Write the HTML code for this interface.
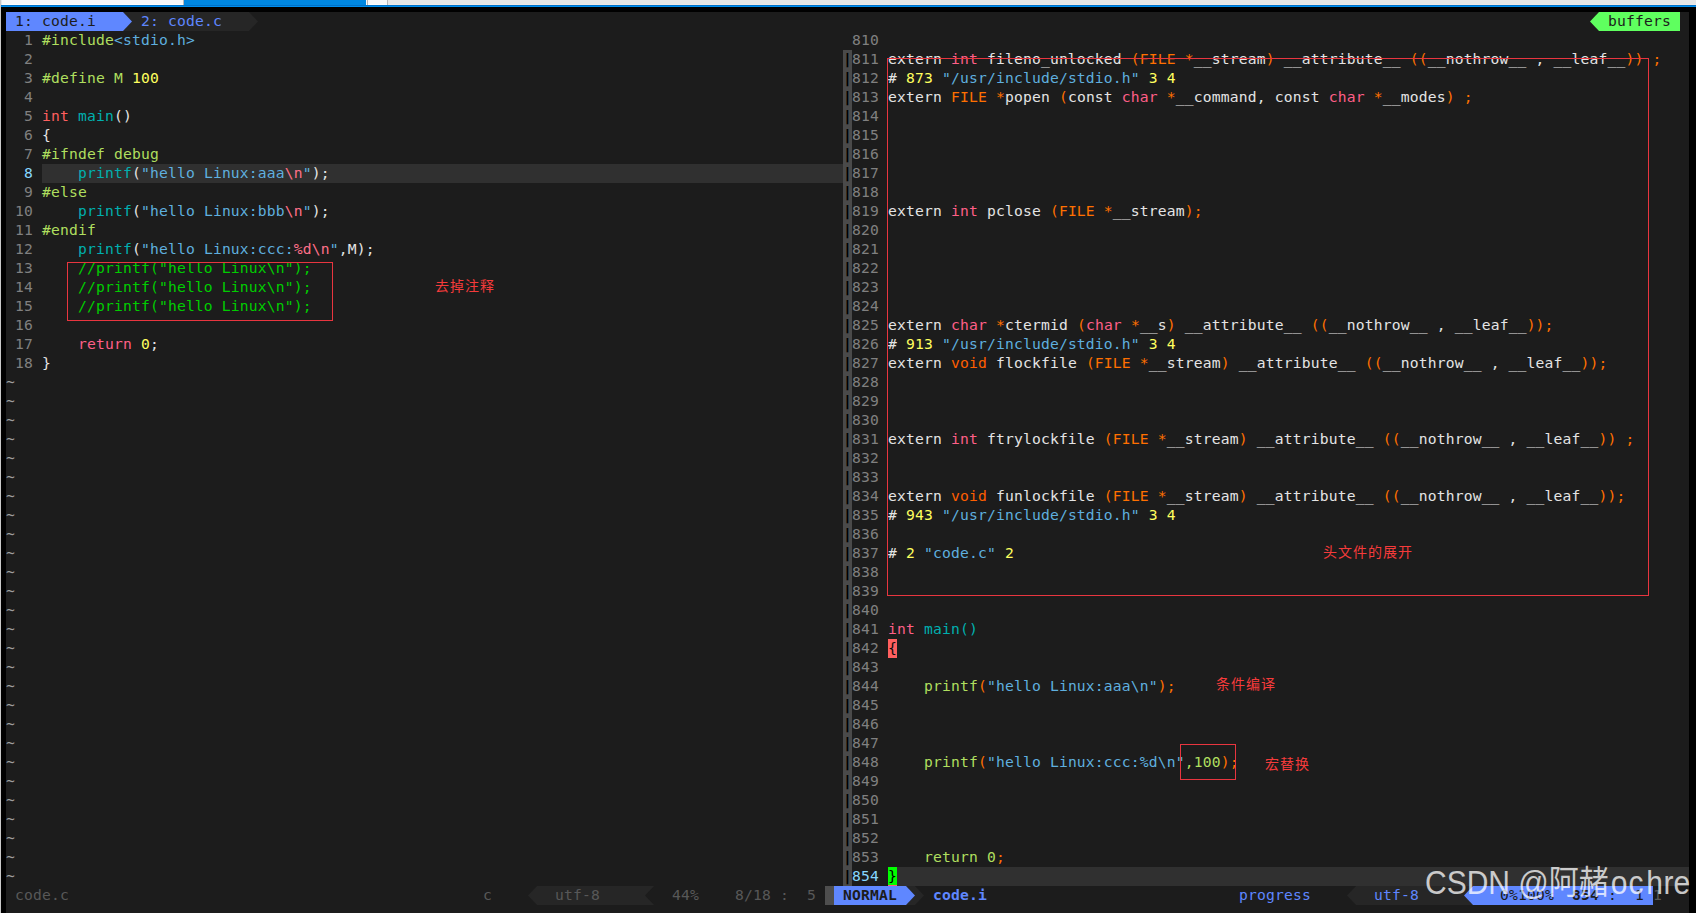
<!DOCTYPE html>
<html lang="zh"><head><meta charset="utf-8"><title>vim - code.i</title>
<style>
html,body{margin:0;padding:0}
body{width:1696px;height:913px;overflow:hidden;position:relative;background:#1c1c1c;
font-family:"DejaVu Sans Mono","Liberation Mono",monospace;font-size:14.667px;line-height:19px;color:#e4e4e4}
.r{position:absolute;white-space:pre;height:19px;letter-spacing:0.1697px}
.bx{position:absolute;height:19px}
.ar{position:absolute;display:block}
.vs{position:absolute;left:843px;width:9px;height:19px;background:#4a4a4a;color:#000;font-weight:bold;white-space:pre}
.vs span{display:block;height:19px;margin-top:-1px}
.top{position:absolute}
.n{color:#808080}.cn{color:#87d7ff}
.w{color:#e4e4e4}.pp{color:#afdf5f}.s{color:#5fafdf}.nu{color:#ffff5f}
.ty{color:#ff5f5f}.tp{color:#ff5f87}.fn{color:#00afaf}.sp{color:#ff7088}.cm{color:#00cd00}.kw{color:#ff5f87}
.o{color:#ff7000}.vo{color:#ff5f00}.id{color:#afdf5f}.tl{color:#9e9e9e}
.mp{color:#0a0a0a}.cu{color:#000}
.tb{color:#1c1c1c}.tb2{color:#5f87ff}.tbb{color:#1c1c1c;font-weight:bold}
.si{color:#585858}.sb{color:#5f87ff}.fi{color:#5f87ff;font-weight:bold}.nm{color:#1c1c1c;font-weight:bold}
.ann{position:absolute;color:#f53b3b;font-family:"Liberation Sans","Noto Sans CJK SC",sans-serif;font-size:14px;letter-spacing:1px;line-height:19px;white-space:pre}
.rb{position:absolute;border:1px solid #e8353f;box-sizing:border-box}
.wm{position:absolute;left:1425px;top:865px;transform:scaleY(1.09);transform-origin:0 29px;font-family:"Liberation Sans","Noto Sans CJK SC",sans-serif;font-size:30px;line-height:38px;color:rgba(255,255,255,0.75);white-space:pre}
</style></head><body>
<div class="top" style="left:0;top:0;width:1696px;height:5px;background:#e6e6e6"></div>
<div class="top" style="left:2px;top:0;width:385px;height:4px;background:#f8f8f8"></div>
<div class="top" style="left:2px;top:4px;width:385px;height:1px;background:#fffefc"></div>
<div class="top" style="left:388px;top:4px;width:1308px;height:1px;background:#efe9e6"></div>
<div class="top" style="left:183px;top:0;width:1px;height:5px;background:#b8b8b8"></div>
<div class="top" style="left:184px;top:0;width:182px;height:5px;background:#0088e2"></div>
<div class="top" style="left:367px;top:0;width:1px;height:5px;background:#b8b8b8"></div>
<div class="top" style="left:387px;top:0;width:1px;height:5px;background:#b8b8b8"></div>
<div class="top" style="left:0;top:5px;width:1696px;height:1px;background:#0072c9"></div>
<div class="top" style="left:0;top:6px;width:1696px;height:1px;background:#008fef"></div>
<div class="top" style="left:0;top:7px;width:1696px;height:5px;background:#000"></div>
<div class="top" style="left:0;top:7px;width:6px;height:906px;background:#000"></div>
<div class="top" style="left:0;top:0;width:1px;height:913px;background:#c8c8c8"></div>
<div class="top" style="left:1689px;top:7px;width:7px;height:906px;background:#000"></div>
<div class="bx" style="left:888px;top:867px;width:801px;background:#303030"></div>
<div class="bx" style="left:888px;top:639px;width:9px;background:#ff5f5f"></div>
<div class="bx" style="left:888px;top:867px;width:9px;background:#00ff00"></div>
<div class="bx" style="left:888px;top:885px;width:9px;height:1px;background:#ff5f7f"></div>
<div class="bx" style="left:42px;top:164px;width:801px;background:#303030"></div>
<div class="r" style="top:30px;left:6px"><span class="n">  1 </span><span class="pp">#include</span><span class="s">&lt;stdio.h&gt;</span></div>
<div class="r" style="top:49px;left:6px"><span class="n">  2 </span></div>
<div class="r" style="top:68px;left:6px"><span class="n">  3 </span><span class="pp">#define M </span><span class="nu">100</span></div>
<div class="r" style="top:87px;left:6px"><span class="n">  4 </span></div>
<div class="r" style="top:106px;left:6px"><span class="n">  5 </span><span class="ty">int</span><span class="w"> </span><span class="fn">main</span><span class="w">()</span></div>
<div class="r" style="top:125px;left:6px"><span class="n">  6 </span><span class="w">{</span></div>
<div class="r" style="top:144px;left:6px"><span class="n">  7 </span><span class="pp">#ifndef debug</span></div>
<div class="r" style="top:163px;left:6px"><span class="cn">  8 </span><span class="w">    </span><span class="fn">printf</span><span class="w">(</span><span class="s">"hello Linux:aaa</span><span class="sp">\n</span><span class="s">"</span><span class="w">);</span></div>
<div class="r" style="top:182px;left:6px"><span class="n">  9 </span><span class="pp">#else</span></div>
<div class="r" style="top:201px;left:6px"><span class="n"> 10 </span><span class="w">    </span><span class="fn">printf</span><span class="w">(</span><span class="s">"hello Linux:bbb</span><span class="sp">\n</span><span class="s">"</span><span class="w">);</span></div>
<div class="r" style="top:220px;left:6px"><span class="n"> 11 </span><span class="pp">#endif</span></div>
<div class="r" style="top:239px;left:6px"><span class="n"> 12 </span><span class="w">    </span><span class="fn">printf</span><span class="w">(</span><span class="s">"hello Linux:ccc:</span><span class="sp">%d\n</span><span class="s">"</span><span class="w">,M);</span></div>
<div class="r" style="top:258px;left:6px"><span class="n"> 13 </span><span class="cm">    //printf("hello Linux\n");</span></div>
<div class="r" style="top:277px;left:6px"><span class="n"> 14 </span><span class="cm">    //printf("hello Linux\n");</span></div>
<div class="r" style="top:296px;left:6px"><span class="n"> 15 </span><span class="cm">    //printf("hello Linux\n");</span></div>
<div class="r" style="top:315px;left:6px"><span class="n"> 16 </span></div>
<div class="r" style="top:334px;left:6px"><span class="n"> 17 </span><span class="w">    </span><span class="kw">return</span><span class="w"> </span><span class="nu">0</span><span class="w">;</span></div>
<div class="r" style="top:353px;left:6px"><span class="n"> 18 </span><span class="w">}</span></div>
<div class="r" style="top:372px;left:6px"><span class="tl">~</span></div>
<div class="r" style="top:391px;left:6px"><span class="tl">~</span></div>
<div class="r" style="top:410px;left:6px"><span class="tl">~</span></div>
<div class="r" style="top:429px;left:6px"><span class="tl">~</span></div>
<div class="r" style="top:448px;left:6px"><span class="tl">~</span></div>
<div class="r" style="top:467px;left:6px"><span class="tl">~</span></div>
<div class="r" style="top:486px;left:6px"><span class="tl">~</span></div>
<div class="r" style="top:505px;left:6px"><span class="tl">~</span></div>
<div class="r" style="top:524px;left:6px"><span class="tl">~</span></div>
<div class="r" style="top:543px;left:6px"><span class="tl">~</span></div>
<div class="r" style="top:562px;left:6px"><span class="tl">~</span></div>
<div class="r" style="top:581px;left:6px"><span class="tl">~</span></div>
<div class="r" style="top:600px;left:6px"><span class="tl">~</span></div>
<div class="r" style="top:619px;left:6px"><span class="tl">~</span></div>
<div class="r" style="top:638px;left:6px"><span class="tl">~</span></div>
<div class="r" style="top:657px;left:6px"><span class="tl">~</span></div>
<div class="r" style="top:676px;left:6px"><span class="tl">~</span></div>
<div class="r" style="top:695px;left:6px"><span class="tl">~</span></div>
<div class="r" style="top:714px;left:6px"><span class="tl">~</span></div>
<div class="r" style="top:733px;left:6px"><span class="tl">~</span></div>
<div class="r" style="top:752px;left:6px"><span class="tl">~</span></div>
<div class="r" style="top:771px;left:6px"><span class="tl">~</span></div>
<div class="r" style="top:790px;left:6px"><span class="tl">~</span></div>
<div class="r" style="top:809px;left:6px"><span class="tl">~</span></div>
<div class="r" style="top:828px;left:6px"><span class="tl">~</span></div>
<div class="r" style="top:847px;left:6px"><span class="tl">~</span></div>
<div class="r" style="top:866px;left:6px"><span class="tl">~</span></div>
<div class="r" style="top:30px;left:852px"><span class="n">810 </span></div>
<div class="r" style="top:49px;left:852px"><span class="n">811 </span><span class="w">extern </span><span class="tp">int</span><span class="w"> fileno_unlocked </span><span class="o">(FILE *</span><span class="w">__stream</span><span class="o">)</span><span class="w"> __attribute__ </span><span class="o">((</span><span class="w">__nothrow__ , __leaf__</span><span class="o">)) ;</span></div>
<div class="vs" style="top:50px"><span>|</span></div>
<div class="r" style="top:68px;left:852px"><span class="n">812 </span><span class="w"># </span><span class="nu">873</span><span class="w"> </span><span class="s">"/usr/include/stdio.h"</span><span class="w"> </span><span class="nu">3 4</span></div>
<div class="vs" style="top:69px"><span>|</span></div>
<div class="r" style="top:87px;left:852px"><span class="n">813 </span><span class="w">extern </span><span class="o">FILE *</span><span class="w">popen </span><span class="o">(</span><span class="w">const </span><span class="tp">char</span><span class="w"> </span><span class="o">*</span><span class="w">__command, const </span><span class="tp">char</span><span class="w"> </span><span class="o">*</span><span class="w">__modes</span><span class="o">) ;</span></div>
<div class="vs" style="top:88px"><span>|</span></div>
<div class="r" style="top:106px;left:852px"><span class="n">814 </span></div>
<div class="vs" style="top:107px"><span>|</span></div>
<div class="r" style="top:125px;left:852px"><span class="n">815 </span></div>
<div class="vs" style="top:126px"><span>|</span></div>
<div class="r" style="top:144px;left:852px"><span class="n">816 </span></div>
<div class="vs" style="top:145px"><span>|</span></div>
<div class="r" style="top:163px;left:852px"><span class="n">817 </span></div>
<div class="vs" style="top:164px"><span>|</span></div>
<div class="r" style="top:182px;left:852px"><span class="n">818 </span></div>
<div class="vs" style="top:183px"><span>|</span></div>
<div class="r" style="top:201px;left:852px"><span class="n">819 </span><span class="w">extern </span><span class="tp">int</span><span class="w"> pclose </span><span class="o">(FILE *</span><span class="w">__stream</span><span class="o">);</span></div>
<div class="vs" style="top:202px"><span>|</span></div>
<div class="r" style="top:220px;left:852px"><span class="n">820 </span></div>
<div class="vs" style="top:221px"><span>|</span></div>
<div class="r" style="top:239px;left:852px"><span class="n">821 </span></div>
<div class="vs" style="top:240px"><span>|</span></div>
<div class="r" style="top:258px;left:852px"><span class="n">822 </span></div>
<div class="vs" style="top:259px"><span>|</span></div>
<div class="r" style="top:277px;left:852px"><span class="n">823 </span></div>
<div class="vs" style="top:278px"><span>|</span></div>
<div class="r" style="top:296px;left:852px"><span class="n">824 </span></div>
<div class="vs" style="top:297px"><span>|</span></div>
<div class="r" style="top:315px;left:852px"><span class="n">825 </span><span class="w">extern </span><span class="tp">char</span><span class="w"> </span><span class="o">*</span><span class="w">ctermid </span><span class="o">(</span><span class="tp">char</span><span class="w"> </span><span class="o">*</span><span class="w">__s</span><span class="o">)</span><span class="w"> __attribute__ </span><span class="o">((</span><span class="w">__nothrow__ , __leaf__</span><span class="o">));</span></div>
<div class="vs" style="top:316px"><span>|</span></div>
<div class="r" style="top:334px;left:852px"><span class="n">826 </span><span class="w"># </span><span class="nu">913</span><span class="w"> </span><span class="s">"/usr/include/stdio.h"</span><span class="w"> </span><span class="nu">3 4</span></div>
<div class="vs" style="top:335px"><span>|</span></div>
<div class="r" style="top:353px;left:852px"><span class="n">827 </span><span class="w">extern </span><span class="vo">void</span><span class="w"> flockfile </span><span class="o">(FILE *</span><span class="w">__stream</span><span class="o">)</span><span class="w"> __attribute__ </span><span class="o">((</span><span class="w">__nothrow__ , __leaf__</span><span class="o">));</span></div>
<div class="vs" style="top:354px"><span>|</span></div>
<div class="r" style="top:372px;left:852px"><span class="n">828 </span></div>
<div class="vs" style="top:373px"><span>|</span></div>
<div class="r" style="top:391px;left:852px"><span class="n">829 </span></div>
<div class="vs" style="top:392px"><span>|</span></div>
<div class="r" style="top:410px;left:852px"><span class="n">830 </span></div>
<div class="vs" style="top:411px"><span>|</span></div>
<div class="r" style="top:429px;left:852px"><span class="n">831 </span><span class="w">extern </span><span class="tp">int</span><span class="w"> ftrylockfile </span><span class="o">(FILE *</span><span class="w">__stream</span><span class="o">)</span><span class="w"> __attribute__ </span><span class="o">((</span><span class="w">__nothrow__ , __leaf__</span><span class="o">)) ;</span></div>
<div class="vs" style="top:430px"><span>|</span></div>
<div class="r" style="top:448px;left:852px"><span class="n">832 </span></div>
<div class="vs" style="top:449px"><span>|</span></div>
<div class="r" style="top:467px;left:852px"><span class="n">833 </span></div>
<div class="vs" style="top:468px"><span>|</span></div>
<div class="r" style="top:486px;left:852px"><span class="n">834 </span><span class="w">extern </span><span class="vo">void</span><span class="w"> funlockfile </span><span class="o">(FILE *</span><span class="w">__stream</span><span class="o">)</span><span class="w"> __attribute__ </span><span class="o">((</span><span class="w">__nothrow__ , __leaf__</span><span class="o">));</span></div>
<div class="vs" style="top:487px"><span>|</span></div>
<div class="r" style="top:505px;left:852px"><span class="n">835 </span><span class="w"># </span><span class="nu">943</span><span class="w"> </span><span class="s">"/usr/include/stdio.h"</span><span class="w"> </span><span class="nu">3 4</span></div>
<div class="vs" style="top:506px"><span>|</span></div>
<div class="r" style="top:524px;left:852px"><span class="n">836 </span></div>
<div class="vs" style="top:525px"><span>|</span></div>
<div class="r" style="top:543px;left:852px"><span class="n">837 </span><span class="w"># </span><span class="nu">2</span><span class="w"> </span><span class="s">"code.c"</span><span class="w"> </span><span class="nu">2</span></div>
<div class="vs" style="top:544px"><span>|</span></div>
<div class="r" style="top:562px;left:852px"><span class="n">838 </span></div>
<div class="vs" style="top:563px"><span>|</span></div>
<div class="r" style="top:581px;left:852px"><span class="n">839 </span></div>
<div class="vs" style="top:582px"><span>|</span></div>
<div class="r" style="top:600px;left:852px"><span class="n">840 </span></div>
<div class="vs" style="top:601px"><span>|</span></div>
<div class="r" style="top:619px;left:852px"><span class="n">841 </span><span class="tp">int</span><span class="w"> </span><span class="fn">main()</span></div>
<div class="vs" style="top:620px"><span>|</span></div>
<div class="r" style="top:638px;left:852px"><span class="n">842 </span><span class="mp">{</span></div>
<div class="vs" style="top:639px"><span>|</span></div>
<div class="r" style="top:657px;left:852px"><span class="n">843 </span></div>
<div class="vs" style="top:658px"><span>|</span></div>
<div class="r" style="top:676px;left:852px"><span class="n">844 </span><span class="w">    </span><span class="id">printf</span><span class="o">(</span><span class="s">"hello Linux:aaa\n"</span><span class="o">);</span></div>
<div class="vs" style="top:677px"><span>|</span></div>
<div class="r" style="top:695px;left:852px"><span class="n">845 </span></div>
<div class="vs" style="top:696px"><span>|</span></div>
<div class="r" style="top:714px;left:852px"><span class="n">846 </span></div>
<div class="vs" style="top:715px"><span>|</span></div>
<div class="r" style="top:733px;left:852px"><span class="n">847 </span></div>
<div class="vs" style="top:734px"><span>|</span></div>
<div class="r" style="top:752px;left:852px"><span class="n">848 </span><span class="w">    </span><span class="id">printf</span><span class="o">(</span><span class="s">"hello Linux:ccc:%d\n"</span><span class="id">,100</span><span class="o">);</span></div>
<div class="vs" style="top:753px"><span>|</span></div>
<div class="r" style="top:771px;left:852px"><span class="n">849 </span></div>
<div class="vs" style="top:772px"><span>|</span></div>
<div class="r" style="top:790px;left:852px"><span class="n">850 </span></div>
<div class="vs" style="top:791px"><span>|</span></div>
<div class="r" style="top:809px;left:852px"><span class="n">851 </span></div>
<div class="vs" style="top:810px"><span>|</span></div>
<div class="r" style="top:828px;left:852px"><span class="n">852 </span></div>
<div class="vs" style="top:829px"><span>|</span></div>
<div class="r" style="top:847px;left:852px"><span class="n">853 </span><span class="w">    </span><span class="id">return 0</span><span class="o">;</span></div>
<div class="vs" style="top:848px"><span>|</span></div>
<div class="r" style="top:866px;left:852px"><span class="cn">854 </span><span class="cu">}</span></div>
<div class="vs" style="top:867px"><span>|</span></div>
<div class="bx" style="left:6px;top:12px;width:117px;background:#5f87ff"></div>
<div class="r" style="top:11px;left:6px"><span class="tb"> 1: code.i </span></div>
<svg class="ar" style="left:123px;top:12px;background:#262626" width="9" height="19" viewBox="0 0 9 19"><polygon points="0,0 9,9.5 0,19" fill="#5f87ff"/></svg>
<div class="bx" style="left:132px;top:12px;width:117px;background:#262626"></div>
<div class="r" style="top:11px;left:132px"><span class="tb2"> 2: code.c </span></div>
<svg class="ar" style="left:249px;top:12px;background:#1c1c1c" width="9" height="19" viewBox="0 0 9 19"><polygon points="0,0 9,9.5 0,19" fill="#262626"/></svg>
<svg class="ar" style="left:1590px;top:12px;background:#1c1c1c" width="9" height="19" viewBox="0 0 9 19"><polygon points="9,0 0,9.5 9,19" fill="#5fff5f"/></svg>
<div class="bx" style="left:1599px;top:12px;width:81px;background:#5fff5f"></div>
<div class="r" style="top:11px;left:1599px"><span class="tb"> buffers </span></div>
<div class="r" style="top:885px;left:6px"><span class="si"> code.c</span></div>
<div class="r" style="top:885px;left:483px"><span class="si">c</span></div>
<svg class="ar" style="left:528px;top:886px;background:#1c1c1c" width="9" height="19" viewBox="0 0 9 19"><polygon points="9,0 0,9.5 9,19" fill="#262626"/></svg>
<div class="bx" style="left:537px;top:886px;width:117px;background:#262626"></div>
<svg class="ar" style="left:645px;top:886px;background:#262626" width="9" height="19" viewBox="0 0 9 19"><polygon points="9,0 0,9.5 9,19" fill="#1c1c1c"/></svg>
<div class="r" style="top:885px;left:555px"><span class="si">utf-8</span></div>
<div class="r" style="top:885px;left:672px"><span class="si">44%    8/18 :  5</span></div>
<div class="bx" style="left:825px;top:886px;width:9px;background:#4e4e4e"></div>
<div class="bx" style="left:834px;top:886px;width:72px;background:#5f87ff"></div>
<div class="r" style="top:885px;left:834px"><span class="nm"> NORMAL </span></div>
<svg class="ar" style="left:906px;top:886px;background:#262626" width="9" height="19" viewBox="0 0 9 19"><polygon points="0,0 9,9.5 0,19" fill="#5f87ff"/></svg>
<svg class="ar" style="left:915px;top:886px;background:#1c1c1c" width="9" height="19" viewBox="0 0 9 19"><polygon points="0,0 9,9.5 0,19" fill="#262626"/></svg>
<div class="r" style="top:885px;left:933px"><span class="fi">code.i</span></div>
<div class="r" style="top:885px;left:1239px"><span class="sb">progress</span></div>
<svg class="ar" style="left:1347px;top:886px;background:#1c1c1c" width="9" height="19" viewBox="0 0 9 19"><polygon points="9,0 0,9.5 9,19" fill="#262626"/></svg>
<div class="bx" style="left:1356px;top:886px;width:117px;background:#262626"></div>
<div class="r" style="top:885px;left:1374px"><span class="sb">utf-8</span></div>
<svg class="ar" style="left:1464px;top:886px;background:#262626" width="9" height="19" viewBox="0 0 9 19"><polygon points="9,0 0,9.5 9,19" fill="#5f87ff"/></svg>
<div class="bx" style="left:1473px;top:886px;width:180px;background:#5f87ff"></div>
<div class="r" style="top:885px;left:1500px"><span class="tb">0%100%  </span><span class="tbb">854</span><span class="tb"> :  1 </span><span class="si">1</span></div>
<div class="rb" style="left:67px;top:262px;width:266px;height:59px"></div>
<div class="rb" style="left:887px;top:58px;width:762px;height:538px"></div>
<div class="rb" style="left:1180px;top:744px;width:56px;height:36px"></div>
<div class="ann" style="left:435px;top:277px">去掉注释</div>
<div class="ann" style="left:1323px;top:543px">头文件的展开</div>
<div class="ann" style="left:1216px;top:675px">条件编译</div>
<div class="ann" style="left:1265px;top:755px">宏替换</div>
<div class="wm">CSDN @阿赭<span style="margin-left:2px;letter-spacing:1px">o</span><span style="letter-spacing:2.8px">c</span><span style="letter-spacing:0.5px">h</span>re</div>
</body></html>
